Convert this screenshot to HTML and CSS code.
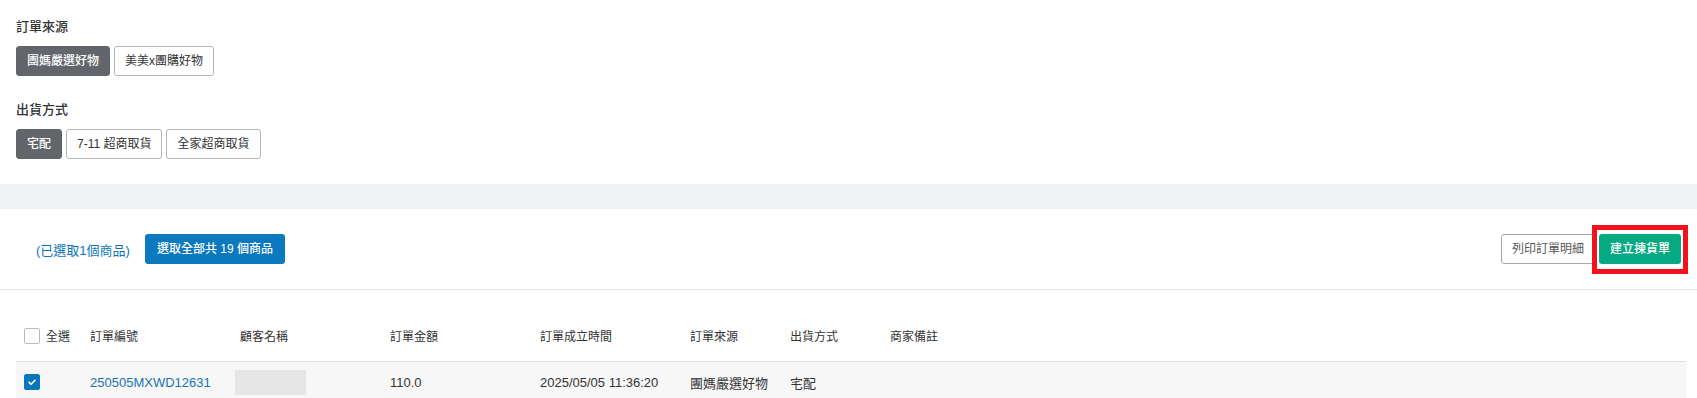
FILE: index.html
```html
<!DOCTYPE html>
<html lang="zh-Hant">
<head>
<meta charset="utf-8">
<link rel="stylesheet" href="styles.css">
</head>
<body>
<section class="filters">
  <div class="filter-group">
    <div class="filter-label">訂單來源</div>
    <div class="btn-row">
      <button class="chip active">團媽嚴選好物</button>
      <button class="chip">美美x團購好物</button>
    </div>
  </div>
  <div class="filter-group">
    <div class="filter-label">出貨方式</div>
    <div class="btn-row">
      <button class="chip active">宅配</button>
      <button class="chip">7-11 超商取貨</button>
      <button class="chip">全家超商取貨</button>
    </div>
  </div>
</section>
<div class="band"></div>
<section class="toolbar">
  <div class="toolbar-left">
    <span class="selected-count">(已選取1個商品)</span>
    <button class="btn btn-blue">選取全部共 19 個商品</button>
  </div>
  <div class="toolbar-right">
    <button class="btn btn-outline">列印訂單明細</button>
    <span class="highlight-wrap">
      <button class="btn btn-green">建立揀貨單</button>
      <span class="highlight"></span>
    </span>
  </div>
</section>
<section class="table">
  <div class="trow thead">
    <div class="cell cell-check"><span class="checkbox"></span><span>全選</span></div>
    <div class="cell">訂單編號</div>
    <div class="cell">顧客名稱</div>
    <div class="cell">訂單金額</div>
    <div class="cell">訂單成立時間</div>
    <div class="cell">訂單來源</div>
    <div class="cell">出貨方式</div>
    <div class="cell">商家備註</div>
  </div>
  <div class="trow tbody">
    <div class="cell cell-check"><span class="checkbox checked"><svg viewBox="0 0 16 16" width="16" height="16"><path d="M5 8.2 L7 10.2 L11 6.2" fill="none" stroke="#fff" stroke-width="1.6" stroke-linecap="round" stroke-linejoin="round"/></svg></span></div>
    <div class="cell"><a class="order-link">250505MXWD12631</a></div>
    <div class="cell"><span class="redacted"></span></div>
    <div class="cell num">110.0</div>
    <div class="cell num">2025/05/05 11:36:20</div>
    <div class="cell">團媽嚴選好物</div>
    <div class="cell">宅配</div>
    <div class="cell"></div>
  </div>
</section>
</body>
</html>
```

FILE: styles.css
```css
* { box-sizing: border-box; }
html, body { margin: 0; padding: 0; background: #fff; }
body {
  font-family: "Liberation Sans", "Noto Sans CJK TC", sans-serif;
  color: #333;
  font-size: 13px;
  width: 1697px;
  height: 398px;
  overflow: hidden;
}
button { font-family: inherit; cursor: pointer; }

.filters {
  padding: 18px 16px 25px 16px;
  display: flex;
  flex-direction: column;
  gap: 25px;
}
.filter-group { display: flex; flex-direction: column; gap: 10px; }
.filter-label {
  font-size: 13px;
  font-weight: 500;
  color: #333;
  line-height: 18px;
}
.btn-row { display: flex; gap: 4px; }
.chip {
  height: 30px;
  padding: 0 10px;
  font-size: 12px;
  border: 1px solid #b5b5b5;
  background: #fff;
  color: #333;
  border-radius: 3px;
  line-height: 28px;
}
.chip.active {
  background: #62666b;
  border-color: #62666b;
  color: #fff;
  font-weight: 500;
}

.band { height: 25px; background: #f0f1f5; }

.toolbar {
  height: 81px;
  display: flex;
  align-items: center;
  justify-content: space-between;
  padding: 0 16px 0 36px;
  border-bottom: 1px solid #e2e2e2;
}
.toolbar-left { display: flex; align-items: center; gap: 15px; }
.selected-count { color: #0b74b8; font-size: 13px; }
.toolbar-right { display: flex; align-items: center; gap: 4px; }
.btn {
  height: 30px;
  padding: 0 10px;
  font-size: 12px;
  border-radius: 3px;
  border: 1px solid transparent;
  line-height: 28px;
}
.btn-blue { background: #0a79bd; color: #fff; font-weight: 500; padding: 0 11px; }
.btn-outline { background: #fff; border-color: #a8a8a8; color: #555; }
.btn-green { background: #05a982; color: #fff; font-weight: 500; }
.highlight-wrap { position: relative; display: inline-flex; }
.highlight {
  position: absolute;
  left: -7px; top: -9px; right: -7px; bottom: -10px;
  border: 5px solid #f5101e;
  pointer-events: none;
}

.table { padding: 20px 11px 0 16px; }
.trow {
  display: grid;
  grid-template-columns: 66px 150px 150px 150px 150px 100px 100px 1fr;
  align-items: center;
}
.thead { height: 52px; border-bottom: 1px solid #dedede; font-size: 12px; color: #333; }
.tbody { height: 40px; background: #f7f7f7; }
.cell { padding-left: 8px; display: flex; align-items: center; white-space: nowrap; }
.cell-check { gap: 6px; }
.checkbox {
  width: 16px; height: 16px;
  border: 1px solid #b9b9b9;
  border-radius: 2px;
  background: #fff;
  display: inline-flex;
}
.checkbox.checked { background: #0b77bb; border-color: #0b77bb; }
.checkbox.checked svg { margin: -1px; }
.order-link { color: #1a73b5; text-decoration: none; }
.redacted { width: 71px; height: 25px; background: #e6e6e6; margin-left: -5px; }
.num { font-size: 13px; }
```
